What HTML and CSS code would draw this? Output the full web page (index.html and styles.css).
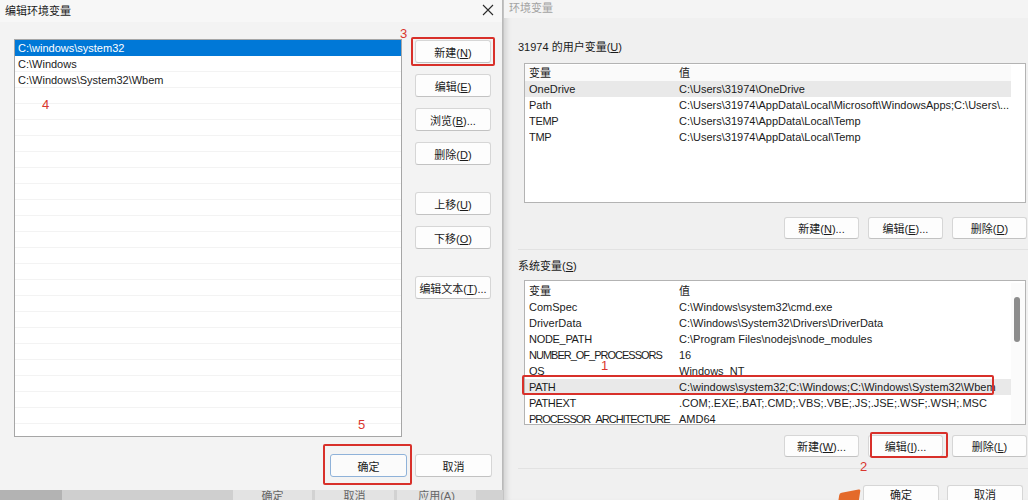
FILE: index.html
```
<!DOCTYPE html>
<html lang="zh-CN">
<head>
    <meta charset="UTF-8">
    <title>编辑环境变量</title>
    <link rel="stylesheet" href="styles.css">
</head>
<body>
    <div class="left-col">
        <div class="edit-dlg">
            <div class="dlg-title">
                <span>编辑环境变量</span>
                <svg class="close" width="12" height="12" viewBox="0 0 12 12">
                    <path d="M1 1 L11 11 M11 1 L1 11" stroke="#2b2b2b" stroke-width="1.1" fill="none"/>
                </svg>
            </div>
            <div class="dlg-body">
                <div class="path-list">
                    <div class="row selected">C:\windows\system32</div>
                    <div class="row">C:\Windows</div>
                    <div class="row">C:\Windows\System32\Wbem</div>
                </div>
                <div class="side-btns">
                    <button class="btn">新建(<u>N</u>)</button>
                    <button class="btn">编辑(<u>E</u>)</button>
                    <button class="btn">浏览(<u>B</u>)...</button>
                    <button class="btn">删除(<u>D</u>)</button>
                    <button class="btn gap-big">上移(<u>U</u>)</button>
                    <button class="btn">下移(<u>O</u>)</button>
                    <button class="btn gap-big">编辑文本(<u>T</u>)...</button>
                </div>
            </div>
            <div class="dlg-foot">
                <button class="btn default">确定</button>
                <button class="btn">取消</button>
            </div>

            <span class="mark" style="left:400px; top:26px;">3</span>
            <span class="mark" style="left:42px; top:97px;">4</span>
            <span class="mark" style="left:358px; top:417px;">5</span>
            <div class="red-box" style="left:411px; top:37px; width:84px; height:29px;"></div>
            <div class="red-box" style="left:323px; top:444px; width:89px; height:41px;"></div>
        </div>
        <div class="under">
            <div class="under-dark"></div>
            <div class="under-mid"></div>
            <div class="under-btn">确定</div>
            <div class="under-btn">取消</div>
            <div class="under-btn">应用(A)</div>
        </div>
    </div>

    <div class="env-win">
        <div class="env-title">环境变量</div>
        <div class="env-body">
            <div class="grp-label">31974 的用户变量(<u>U</u>)</div>
            <div class="var-list user-list">
                <div class="vrow head"><span class="c1">变量</span><span>值</span></div>
                <div class="vrow hl"><span class="c1">OneDrive</span><span>C:\Users\31974\OneDrive</span></div>
                <div class="vrow"><span class="c1">Path</span><span>C:\Users\31974\AppData\Local\Microsoft\WindowsApps;C:\Users\...</span></div>
                <div class="vrow"><span class="c1 caps">TEMP</span><span>C:\Users\31974\AppData\Local\Temp</span></div>
                <div class="vrow"><span class="c1 caps">TMP</span><span>C:\Users\31974\AppData\Local\Temp</span></div>
            </div>
            <div class="btn-row">
                <button class="btn wide">新建(<u>N</u>)...</button>
                <button class="btn wide">编辑(<u>E</u>)...</button>
                <button class="btn wide">删除(<u>D</u>)</button>
            </div>
            <div class="sep"></div>
            <div class="grp-label sys-label">系统变量(<u>S</u>)</div>
            <div class="var-list sys-list">
                <div class="rows">
                    <div class="vrow head"><span class="c1">变量</span><span>值</span></div>
                    <div class="vrow"><span class="c1">ComSpec</span><span>C:\Windows\system32\cmd.exe</span></div>
                    <div class="vrow"><span class="c1">DriverData</span><span>C:\Windows\System32\Drivers\DriverData</span></div>
                    <div class="vrow"><span class="c1 caps">NODE_PATH</span><span>C:\Program Files\nodejs\node_modules</span></div>
                    <div class="vrow"><span class="c1 caps long">NUMBER_OF_PROCESSORS</span><span>16</span></div>
                    <div class="vrow"><span class="c1 caps">OS</span><span>Windows_NT</span></div>
                    <div class="vrow hl"><span class="c1 caps">PATH</span><span>C:\windows\system32;C:\Windows;C:\Windows\System32\Wbem</span></div>
                    <div class="vrow"><span class="c1 caps">PATHEXT</span><span>.COM;.EXE;.BAT;.CMD;.VBS;.VBE;.JS;.JSE;.WSF;.WSH;.MSC</span></div>
                    <div class="vrow"><span class="c1 caps long">PROCESSOR_ARCHITECTURE</span><span>AMD64</span></div>
                </div>
                <div class="scroll"><div class="thumb"></div></div>
            </div>
            <div class="btn-row sys-btns">
                <button class="btn wide">新建(<u>W</u>)...</button>
                <button class="btn wide">编辑(<u>I</u>)...</button>
                <button class="btn wide">删除(<u>L</u>)</button>
            </div>
            <div class="sep low"></div>
            <div class="btn-row ok-row">
                <button class="btn wide">确定</button>
                <button class="btn wide">取消</button>
            </div>
        </div>

        <span class="mark" style="left:97px; top:358px;">1</span>
        <span class="mark" style="left:356px; top:459px;">2</span>
        <div class="red-box" style="left:18px; top:375px; width:472px; height:20px;"></div>
        <div class="red-box" style="left:366px; top:432px; width:78px; height:26px;"></div>
        <div class="arrow-bit"></div>
    </div>
</body>
</html>
```

FILE: styles.css
```
body {
    margin: 0;
    width: 1028px;
    height: 500px;
    overflow: hidden;
    display: flex;
    background: #c4c4c4;
    font-family: "Liberation Sans", "Noto Sans CJK SC", sans-serif;
    font-size: 11px;
    color: #1b1b1b;
}

u {
    text-decoration: underline;
    text-underline-offset: 1px;
}

.left-col {
    width: 503px;
    display: flex;
    flex-direction: column;
}

.edit-dlg {
    position: relative;
    height: 490px;
    background: #f3f3f3;
    border-right: 1px solid #b9b9b9;
    box-sizing: border-box;
}

.dlg-title {
    height: 22px;
    display: flex;
    align-items: center;
    justify-content: space-between;
    padding: 0 8px 2px 5px;
    box-sizing: border-box;
    font-size: 11px;
    background: #f7f7f7;
}

.dlg-body {
    display: flex;
    padding: 17px 0 0 14px;
}

.path-list {
    width: 388px;
    height: 398px;
    box-sizing: border-box;
    border: 1px solid #a6a6a6;
    background: repeating-linear-gradient(to bottom, #fff 0 15px, #f3f3f3 15px 16px);
}

.row {
    height: 16px;
    line-height: 16px;
    padding-left: 3px;
}

.row.selected {
    background: #0078d7;
    color: #fff;
}

.side-btns {
    display: flex;
    flex-direction: column;
    gap: 11px;
    width: 76px;
    margin-left: 13px;
    padding-top: 1px;
}

.side-btns .gap-big {
    margin-top: 16px;
}

.btn {
    height: 23px;
    padding: 0;
    border: 1px solid #d6d6d6;
    border-bottom-color: #c2c2c2;
    border-radius: 3px;
    background: #fdfdfd;
    font-family: inherit;
    font-size: 11px;
    color: #1b1b1b;
}

.btn.default {
    border-color: #8fb2d9;
    background: #fbfbfb;
}

.dlg-foot {
    display: flex;
    justify-content: flex-end;
    gap: 8px;
    padding: 17px 10px 0 0;
}

.dlg-foot .btn {
    width: 77px;
}

.mark {
    position: absolute;
    color: #d9362e;
    font-size: 13px;
    font-family: "Liberation Sans", sans-serif;
}

.red-box {
    position: absolute;
    border: 2px solid #d8302a;
    box-sizing: border-box;
    border-radius: 2px;
}

.under {
    height: 10px;
    display: flex;
    overflow: hidden;
    background: #d2d2d2;
}

.under-dark {
    width: 62px;
    background: #b3b3b3;
}

.under-mid {
    width: 171px;
    background: #cfcfcf;
}

.under-btn {
    width: 79px;
    margin-right: 3px;
    background: #e3e3e3;
    color: #666;
    text-align: center;
    line-height: 10px;
    font-size: 11px;
    padding-top: 1px;
}

.env-win {
    position: relative;
    flex: 1;
    margin-left: 1px;
    background: #f0f0f0;
    box-shadow: inset 6px 0 5px -3px #d6d6d6;
}

.env-title {
    height: 18px;
    line-height: 16px;
    padding-left: 5px;
    color: #a3a3a3;
    background: #f4f4f4;
}

.env-body {
    padding-left: 14px;
}

.grp-label {
    height: 16px;
    line-height: 16px;
    margin-top: 21px;
}

.sys-label {
    margin-top: 8px;
}

.var-list {
    width: 502px;
    margin: 8px 0 0 6px;
    height: 140px;
    box-sizing: border-box;
    border: 1px solid #b3b3b3;
    background: #fff;
    padding-top: 1px;
    overflow: hidden;
}

.sys-list {
    margin-top: 6px;
    height: 145px;
    padding-top: 2px;
    display: flex;
}

.sys-list .rows {
    flex: 1;
}

.vrow {
    display: flex;
    height: 16px;
    line-height: 16px;
    padding-left: 4px;
    margin-right: 14px;
    white-space: nowrap;
}

.vrow .c1 {
    width: 150px;
    flex-shrink: 0;
    overflow: hidden;
}

.vrow .caps {
    letter-spacing: -0.3px;
}

.vrow .long {
    letter-spacing: -1px;
}

.vrow.hl {
    background: #e9e9e9;
}

.user-list .vrow.head {
    background: #fafafa;
}

.sys-list .vrow {
    margin-right: 0;
}

.scroll {
    width: 14px;
    position: relative;
    background: #fbfbfb;
}

.thumb {
    position: absolute;
    left: 3px;
    top: 14px;
    width: 6px;
    height: 45px;
    border-radius: 3px;
    background: #8c8c8c;
}

.btn-row {
    display: flex;
    justify-content: flex-end;
    gap: 9px;
    margin-top: 14px;
    padding-right: 1px;
}

.btn-row .btn {
    width: 75px;
    height: 22px;
}

.sys-btns {
    margin-top: 10px;
}

.sep {
    height: 1px;
    margin-top: 10px;
    background: #e2e2e2;
}

.sep.low {
    margin-top: 11px;
}

.ok-row {
    margin-top: 16px;
    gap: 8px;
    padding-right: 5px;
}

.ok-row .btn {
    width: 76px;
    height: 24px;
    padding-bottom: 6px;
}

.arrow-bit {
    position: absolute;
    left: 335px;
    top: 491px;
    width: 20px;
    height: 14px;
    background: #e46a2a;
    transform: skewX(-20deg) rotate(-12deg);
    border-radius: 2px;
}
```
